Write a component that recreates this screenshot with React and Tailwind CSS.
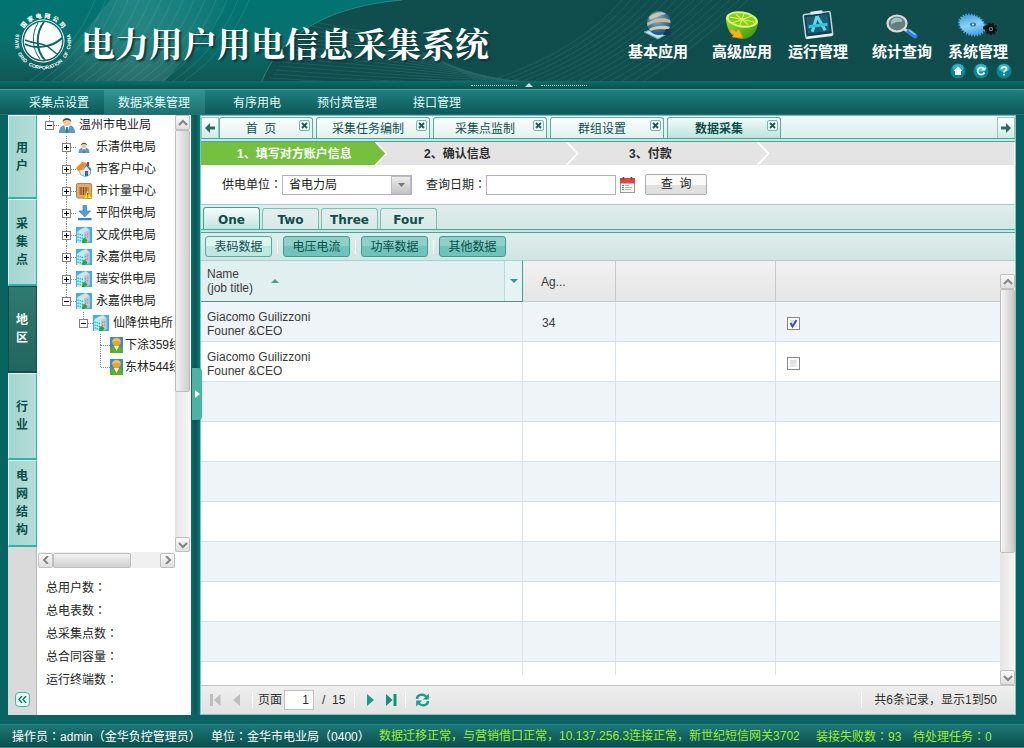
import React, { useState } from "react";

const Colon = () => <span className="font-['Noto_Sans_CJK_JP',sans-serif]">：</span>;

/* ---------- header drawings ---------- */

function HeaderBackdrop() {
  const fans = Array.from({ length: 15 }, (_, i) => i);
  return (
    <svg className="absolute inset-0 h-full w-full" viewBox="0 0 1024 81" preserveAspectRatio="xMinYMin slice" aria-hidden="true">
      <defs>
        <linearGradient id="hb" x1="0" y1="0" x2="0" y2="1">
          <stop offset="0" stopColor="#017472" />
          <stop offset="0.5" stopColor="#08706d" />
          <stop offset="1" stopColor="#0f5855" />
        </linearGradient>
        <linearGradient id="ray" x1="0" y1="0" x2="1" y2="0">
          <stop offset="0" stopColor="#fff" stopOpacity="0" />
          <stop offset="0.5" stopColor="#9fd0cb" stopOpacity="0.2" />
          <stop offset="1" stopColor="#fff" stopOpacity="0" />
        </linearGradient>
      </defs>
      <rect width="1024" height="81" fill="url(#hb)" />
      <path d="M45 81L110 0H235L165 81Z" fill="url(#ray)" />
      {fans.map((i) => (
        <path key={i} d={`M${30 + i * 11} 81Q${75 + i * 11} 50 ${95 + i * 11} 0`} stroke="#7fbdb6" strokeOpacity="0.2" fill="none" />
      ))}
      <path d="M262 81C276 46 312 8 402 0H1024V81Z" fill="#104e4d" />
      <path d="M262 81C276 46 312 8 402 0" stroke="#2a8783" fill="none" />
      {fans.map((i) => (
        <path key={i} d={`M${312 - i * 3} ${22 + i * 4}Q${400 + i * 3} ${34 + i * 4} ${480 + i * 5} 82`} stroke="#2c6b68" strokeOpacity="0.6" fill="none" />
      ))}
      {fans.map((i) => (
        <path key={i} d={`M${490 + i * 11} 81Q${580 + i * 8} 50 ${622 + i * 9} 0`} stroke="#2a6a66" strokeOpacity="0.55" fill="none" />
      ))}
    </svg>
  );
}

const RING_WORDS = [
  { word: "STATE", at: 3 },
  { word: "GRID", at: 23 },
  { word: "CORPORATION", at: 39 },
  { word: "OF", at: 80 },
  { word: "CHINA", at: 90 },
];

function Logo() {
  return (
    <svg width="58" height="58" viewBox="0 0 58 58" className="overflow-visible" role="img" aria-label="国家电网公司">
      <defs>
        <path id="arcBottom" d="M3 19A28 28 0 1 0 55 19" />
      </defs>
      <circle cx="29" cy="29" r="21" fill="none" stroke="#fff" strokeWidth="1" />
      <circle cx="29" cy="29" r="19" fill="#fff" />
      <g fill="none" stroke="#0b6663">
        <path d="M30 10C22 20 21 38 31 48" strokeWidth="2" />
        <path d="M24 11C17 22 18 37 26 47" strokeWidth="1" />
        <path d="M11 32C20 37 38 36 48 26" strokeWidth="2" />
        <path d="M11 28C20 32 28 31 33 34C37 37 40 40 43 42" strokeWidth="1.500" />
      </g>
      {"国家电网公司".split("").map((ch, i) => (
        <text
          key={ch}
          x="29"
          y="6"
          transform={`rotate(${-50 + i * 20} 29 29)`}
          textAnchor="middle"
          fill="#fff"
          fontSize="6"
          fontWeight="900"
          fontFamily="'Noto Sans CJK SC', sans-serif"
        >
          {ch}
        </text>
      ))}
      {RING_WORDS.map((w) => (
        <text key={w.word} fill="#fff" fontSize="5" fontWeight="bold" fontFamily="'Liberation Sans', sans-serif">
          <textPath href="#arcBottom" startOffset={w.at}>{w.word}</textPath>
        </text>
      ))}
    </svg>
  );
}

function GlobeIcon() {
  return (
    <svg width="32" height="32" viewBox="0 0 32 32" aria-hidden="true">
      <defs>
        <radialGradient id="gl" cx="0.4" cy="0.35" r="0.7">
          <stop offset="0" stopColor="#7ab8df" />
          <stop offset="1" stopColor="#17466f" />
        </radialGradient>
      </defs>
      <path d="M2 23L16 30L30 22L20 17Z" fill="#b5e5f5" stroke="#5fa8c8" />
      <circle cx="17" cy="14" r="12" fill="url(#gl)" />
      <path d="M7 8C12 3 20 2 24 5C18 6 13 9 8 11Z" fill="#cfc5a4" />
      <path d="M5 14C12 9 23 8 28 11L28.500 14C21 12 11 13 5.500 17Z" fill="#c9b98c" />
      <path d="M7 20C13 16 24 16 28 18L26 21C19 19 13 20 9 22Z" fill="#d8caa2" />
      <path d="M24 20H31L28 26H21Z" fill="#123a5c" />
    </svg>
  );
}

function LimeIcon() {
  return (
    <svg width="36" height="32" viewBox="0 0 36 32" aria-hidden="true">
      <defs>
        <linearGradient id="lm" x1="0" y1="0" x2="1" y2="1">
          <stop offset="0" stopColor="#a6e62e" />
          <stop offset="1" stopColor="#2c8f13" />
        </linearGradient>
      </defs>
      <path d="M2 8C2 22 9 30 18 30C28 30 34 22 34 12Z" fill="url(#lm)" />
      <ellipse cx="18" cy="10.500" rx="16" ry="8" transform="rotate(9 18 10.500)" fill="#d6f77a" />
      <ellipse cx="18" cy="10.500" rx="13.500" ry="6" transform="rotate(9 18 10.500)" fill="#86cf14" />
      <g stroke="#d9f36a" strokeWidth="1.200">
        <path d="M6 8L30 13M12 5.500L24 15.500M20 4.500L16 16M28 7L8 14" />
      </g>
      <path d="M7 19L12 23L15 20L19 29L8 28L10 26L6 23Z" fill="#ffb01f" stroke="#f08a00" strokeWidth="0.600" />
    </svg>
  );
}

function AppIcon() {
  return (
    <svg width="34" height="32" viewBox="0 0 34 32" aria-hidden="true">
      <g transform="rotate(-7 17 16)">
        <rect x="3.500" y="4" width="27" height="24" rx="1.500" fill="#123f4e" stroke="#c4d8dc" strokeWidth="1.500" />
        <rect x="6" y="6.500" width="22" height="17" fill="#186072" />
        <rect x="11" y="2" width="12" height="3" fill="#e4ecec" />
        <path d="M17 7L10.500 22M17 7L23.500 22" stroke="#5fdcea" strokeWidth="3" />
        <path d="M7.500 16.500H26.500" stroke="#39bfd6" strokeWidth="3" />
        <path d="M4.500 27H30" stroke="#f4f8f8" strokeWidth="2" />
      </g>
    </svg>
  );
}

function MagnifierIcon() {
  return (
    <svg width="34" height="32" viewBox="0 0 34 32" aria-hidden="true">
      <path d="M19 20L24 23" stroke="#d9d9d9" strokeWidth="3" />
      <path d="M24 22.500L30 27" stroke="#2e83dd" strokeWidth="5" strokeLinecap="round" />
      <path d="M24.500 21.300L30 25.500" stroke="#8cc4ff" strokeWidth="1.500" strokeLinecap="round" />
      <ellipse cx="12" cy="14.500" rx="9.500" ry="8" fill="#60807f" stroke="#e0d8d4" strokeWidth="2.200" />
      <path d="M6 14C6 10 10 8 14 9C18 10 18 13 16 13C12 12 8 14 6 16Z" fill="#a9bebd" />
    </svg>
  );
}

function GearsIcon() {
  return (
    <svg width="42" height="32" viewBox="0 0 42 32" aria-hidden="true">
      <defs>
        <linearGradient id="gr" x1="0" y1="0" x2="1" y2="1">
          <stop offset="0" stopColor="#2d8fd0" />
          <stop offset="0.5" stopColor="#8ad4fb" />
          <stop offset="1" stopColor="#2b86cc" />
        </linearGradient>
      </defs>
      <g transform="rotate(22 15 16)">
        <ellipse cx="15" cy="16" rx="13.500" ry="10" fill="none" stroke="#49a9e4" strokeWidth="1.800" strokeDasharray="1.500 1.300" />
        <ellipse cx="15" cy="16" rx="13" ry="9.500" fill="url(#gr)" />
      </g>
      <ellipse cx="16" cy="15.500" rx="3" ry="2" fill="#2b6fb0" />
      <circle cx="16" cy="15.500" r="1" fill="#fff" />
      <path d="M26 19L33 18" stroke="#111" strokeWidth="3" />
      <circle cx="34" cy="20" r="5" fill="#111" stroke="#161616" strokeWidth="2.500" strokeDasharray="2 1.400" />
      <circle cx="34" cy="20" r="2.200" fill="#6b7676" />
      <circle cx="34" cy="20" r="0.900" fill="#111" />
    </svg>
  );
}

function RoundButton({ label, children }) {
  return (
    <button type="button" aria-label={label} className="h-4 w-4">
      <svg width="16" height="16" viewBox="0 0 16 16" aria-hidden="true">
        <circle cx="8" cy="8" r="7.500" fill="#07869a" />
        <ellipse cx="8" cy="5" rx="5.500" ry="4" fill="#25b9c8" />
        {children}
      </svg>
    </button>
  );
}

/* ---------- tree icons ---------- */

function PersonIcon({ small }) {
  const s = small ? 11 : 16;
  return (
    <svg width="16" height={s} viewBox="0 0 16 16" aria-hidden="true">
      <path d="M0 16C0 10 3 8 8 8C13 8 16 10 16 16Z" fill="#5b9bd0" />
      <path d="M5 8L8 16L11 8Z" fill="#eef7ff" />
      <path d="M7.200 10H8.800L9.400 16H6.600Z" fill="#2f8a55" />
      <circle cx="8" cy="5" r="4" fill="#f4c9a0" />
      <path d="M3.800 5C3 0 13 0 12.200 5C11 3 9 3 8 3C6 3 5 3.500 3.800 5Z" fill="#5d471a" />
    </svg>
  );
}
function HouseIcon() {
  return (
    <svg width="16" height="16" viewBox="0 0 16 16" aria-hidden="true">
      <path d="M2 8L5 14L10 16L14.500 13V7L10 3Z" fill="#dceafa" stroke="#5d8fc9" strokeWidth="0.700" />
      <path d="M11 1H13V5H11Z" fill="#c22d2d" />
      <path d="M0 7L6 1L11 2L6 9L2 10Z" fill="#f58a1f" />
      <path d="M10.500 3L15.500 9L14 9.500L10.500 5L6 10Z" fill="#3a6fb3" />
      <path d="M9 10H12V15H9Z" fill="#3069ad" />
    </svg>
  );
}
function CrateIcon() {
  return (
    <svg width="16" height="16" viewBox="0 0 16 16" aria-hidden="true">
      <rect x="0.500" y="0.500" width="15" height="14.500" rx="1.500" fill="#e0ab70" stroke="#b98048" />
      <rect x="3" y="4" width="10" height="8" fill="#c48a50" />
      <path d="M5 4V12M7.500 4V12M10 4V12" stroke="#84521f" />
      <path d="M11.500 7L16 15.500H7.500Z" fill="#ffe43a" stroke="#b69a00" strokeWidth="0.700" />
      <path d="M11.800 10V12.500M11.800 13.500V14.500" stroke="#222" />
    </svg>
  );
}
function DownloadIcon() {
  return (
    <svg width="16" height="16" viewBox="0 0 16 16" aria-hidden="true">
      <path d="M7 0.500H10.500V6H14.500L8.700 12L3 6H7Z" fill="#4d9fe0" stroke="#2d7fc4" strokeWidth="0.700" />
      <rect x="2" y="13" width="13.500" height="2.200" fill="#2d85cf" />
    </svg>
  );
}
function BuildingIcon() {
  return (
    <svg width="16" height="16" viewBox="0 0 16 16" aria-hidden="true">
      <rect width="16" height="16" fill="#3fadf2" />
      <path d="M1 5L5 2L10 0L13.500 3V14L8 16H1Z" fill="#d8e2e6" />
      <path d="M3 3L8 5V16L1 14V6Z" fill="#b6f0f2" />
      <path d="M8 5L13.500 3V14L8 16Z" fill="#c4c4cb" />
      <path d="M1.500 7L7 8.500M1.500 10L7 11.500M1.500 13L7 14.500" stroke="#17b3c4" strokeDasharray="1.200 1" strokeWidth="1.500" />
      <path d="M9 8L13 6.500M9 10.500L13 9.500" stroke="#7d8490" strokeDasharray="1 1" />
      <path d="M6.500 12.500C8 10 10 11 11.500 14L9 16H6Z" fill="#2fa534" />
    </svg>
  );
}
function UserTileIcon() {
  return (
    <svg width="13" height="16" viewBox="0 0 13 16" aria-hidden="true">
      <rect width="13" height="16" fill="#2d8fd6" />
      <path d="M0 16V12C1 9.500 4 9 6.500 9C9 9 12 9.500 13 12V16Z" fill="#5fae22" />
      <path d="M4 9H9L6.500 14Z" fill="#f2fbe8" />
      <circle cx="6.500" cy="5" r="4.300" fill="#f4a11c" />
      <path d="M2.200 5C2 0 11 0 10.800 5C9 3.500 4 3.500 2.200 5Z" fill="#f7c14e" />
    </svg>
  );
}

const ICONS = {
  person: <PersonIcon />,
  small: <PersonIcon small />,
  house: <HouseIcon />,
  crate: <CrateIcon />,
  down: <DownloadIcon />,
  building: <BuildingIcon />,
  user: <UserTileIcon />,
};

const TREE = {
  label: "温州市电业局",
  icon: "person",
  children: [
    { label: "乐清供电局", icon: "small" },
    { label: "市客户中心", icon: "house" },
    { label: "市计量中心", icon: "crate" },
    { label: "平阳供电局", icon: "down" },
    { label: "文成供电局", icon: "building" },
    { label: "永嘉供电局", icon: "building" },
    { label: "瑞安供电局", icon: "building" },
    {
      label: "永嘉供电局",
      icon: "building",
      children: [
        {
          label: "仙降供电所",
          icon: "building",
          children: [
            { label: "下涂359线", icon: "user", leaf: true },
            { label: "东林544线", icon: "user", leaf: true },
          ],
        },
      ],
    },
  ],
};

function TreeNode({ node, last }) {
  return (
    <li>
      <div className="flex h-[22px] items-center whitespace-nowrap [&_svg]:shrink-0">
        <span className="flex h-full w-[9px] shrink-0 flex-col items-center">
          <span className="flex-1 border-l border-dotted border-[#888]" />
          {!node.leaf && (
            <button
              type="button"
              aria-label={node.children ? "收起" : "展开"}
              className="flex h-[9px] w-[9px] items-center justify-center border border-[#808080] bg-white"
            >
              <svg width="5" height="5" viewBox="0 0 5 5" aria-hidden="true">
                <path d={node.children ? "M0 2.500H5" : "M0 2.500H5M2.500 0V5"} stroke="#000" />
              </svg>
            </button>
          )}
          <span className={last ? "flex-1 border-l border-transparent" : "flex-1 border-l border-dotted border-[#888]"} />
        </span>
        <span className={node.leaf ? "-ml-1 w-[9px] shrink-0 border-t border-dotted border-[#888]" : "w-[5px] shrink-0 border-t border-dotted border-[#888]"} />
        {ICONS[node.icon]}
        <a href="#" className={node.leaf ? "ml-0.5" : "ml-1"}>{node.label}</a>
      </div>
      {node.children && (
        <ul className="pl-[17px]">
          {node.children.map((c, i) => (
            <TreeNode key={i} node={c} last={i === node.children.length - 1} />
          ))}
        </ul>
      )}
    </li>
  );
}

/* ---------- scroll bars ---------- */

const CHEVRONS = { up: "M1 6L5 2L9 6", down: "M1 2L5 6L9 2", left: "M7 0L3 4L7 8", right: "M3 0L7 4L3 8" };

function ScrollButton({ dir }) {
  return (
    <button
      type="button"
      aria-label={dir}
      className="flex h-[15px] w-[15px] shrink-0 items-center justify-center rounded-xs border border-[#c0c0c0] bg-gradient-to-b from-[#fafafa] to-[#dedede]"
    >
      <svg width="10" height="8" viewBox="0 0 10 8" aria-hidden="true">
        <path d={CHEVRONS[dir]} fill="none" stroke="#858585" strokeWidth="2" />
      </svg>
    </button>
  );
}

function VScroll({ thumb }) {
  return (
    <div className="flex h-full w-[15px] shrink-0 flex-col bg-gradient-to-r from-[#e4e4e4] to-[#f6f6f6]">
      <ScrollButton dir="up" />
      <div className="min-h-0 flex-1">
        <div className={thumb} />
      </div>
      <ScrollButton dir="down" />
    </div>
  );
}

/* ---------- page parts ---------- */

const MENU = [
  { label: "基本应用", icon: <GlobeIcon />, gap: "mr-6" },
  { label: "高级应用", icon: <LimeIcon />, gap: "mr-4" },
  { label: "运行管理", icon: <AppIcon />, gap: "mr-6" },
  { label: "统计查询", icon: <MagnifierIcon />, gap: "mr-4" },
  { label: "系统管理", icon: <GearsIcon />, gap: "" },
];

function Header() {
  return (
    <header className="relative flex h-[81px] justify-between overflow-hidden bg-[#104e4d]">
      <HeaderBackdrop />
      <div className="relative flex items-center gap-[9px] pl-[14px]">
        <Logo />
        <h1 className="pt-1 font-['Noto_Serif_CJK_SC','Noto_Sans_CJK_SC',serif] text-[34px] leading-none font-bold whitespace-nowrap text-white [text-shadow:2px_2px_2px_#0a3a39]">
          电力用户用电信息采集系统
        </h1>
      </div>
      <div className="relative flex flex-col items-end pt-[9px]">
        <nav className="flex pr-4">
          {MENU.map((m) => (
            <a key={m.label} href="#" className={"flex w-[60px] flex-col items-center text-[15px] leading-[22px] font-bold whitespace-nowrap text-white " + m.gap}>
              {m.icon}
              <span>{m.label}</span>
            </a>
          ))}
        </nav>
        <div className="flex gap-[7px] pr-3">
          <RoundButton label="首页">
            <path d="M8 3.500L3.500 8H5V12H11V8H12.500Z" fill="#fff" />
          </RoundButton>
          <RoundButton label="刷新">
            <path d="M11.300 9.500A3.500 3.500 0 1 1 11 6" stroke="#fff" strokeWidth="1.800" fill="none" />
            <path d="M7.500 7.500H12.500V4Z" fill="#fff" />
          </RoundButton>
          <RoundButton label="帮助">
            <path d="M5.500 6.300C5.500 3 10.700 3.300 10.500 6C10.400 7.700 8 7.500 8 9.600M8 10.800V12.500" stroke="#fff" strokeWidth="1.900" fill="none" />
          </RoundButton>
        </div>
      </div>
    </header>
  );
}

const NAV = [
  { label: "采集点设置", cls: "pl-[14px] pr-[15px]" },
  { label: "数据采集管理", cls: "mr-[10px] pl-[14px] pr-[15px] bg-gradient-to-b from-[#319593] to-[#1c716f]" },
  { label: "有序用电", cls: "px-[18px]" },
  { label: "预付费管理", cls: "px-[18px]" },
  { label: "接口管理", cls: "px-[18px]" },
];

const SIDE = [
  { label: "用户", cls: "h-[84px]" },
  { label: "采集点", cls: "h-[87px]" },
  { label: "地区", cls: "h-[87px]", active: true },
  { label: "行业", cls: "h-[87px]" },
  { label: "电网结构", cls: "h-[87px]" },
];

function Sidebar() {
  return (
    <aside className="flex shrink-0">
      <div className="flex w-[29px] flex-col items-center border-r border-[#b5b5b5] bg-[#dadada]">
        {SIDE.map((s) => (
          <button
            key={s.label}
            type="button"
            className={
              "flex w-[29px] flex-col items-center justify-center border border-b-2 text-xs leading-[18px] font-bold " +
              s.cls +
              (s.active
                ? " border-[#0b4f4b] border-t-[#0b4f4b] bg-gradient-to-b from-[#2f7a70] to-[#22665e] text-white"
                : " border-[#e4f6f3] border-r-[#2fb3a4] border-b-[#2fb3a4] bg-gradient-to-r from-[#a3d6cf] to-[#b3ded8] text-[#0c4f4b]")
            }
          >
            {s.label.split("").map((ch) => (
              <span key={ch}>{ch}</span>
            ))}
          </button>
        ))}
        <button type="button" aria-label="收起" className="mt-auto mb-2 flex h-[15px] w-[15px] items-center justify-center rounded-sm border border-[#3fb8a5] bg-[#e6f8f4]">
          <svg width="9" height="7" viewBox="0 0 9 7" aria-hidden="true">
            <path d="M4 0L1 3.500L4 7M8 0L5 3.500L8 7" stroke="#0f7a68" strokeWidth="1.400" fill="none" />
          </svg>
        </button>
      </div>
      <div className="flex w-[154px] flex-col bg-white pr-px">
        <div className="flex h-[437px]">
          <ul className="-mt-px min-w-0 flex-1 overflow-hidden pl-2">
            <TreeNode node={TREE} last />
          </ul>
          <VScroll thumb="h-[262px] rounded-xs border border-[#bdbdbd] bg-gradient-to-r from-[#f3f3f3] to-[#cfcfcf]" />
        </div>
        <div className="mr-[15px] ml-px flex h-4 items-center bg-[#f0f0f0]">
          <ScrollButton dir="left" />
          <div className="flex-1">
            <div className="h-[15px] w-[78px] rounded-xs border border-[#bdbdbd] bg-gradient-to-b from-[#f3f3f3] to-[#cfcfcf]" />
          </div>
          <ScrollButton dir="right" />
        </div>
        <ul className="pt-[7px] pl-[9px] leading-[23px]">
          {["总用户数", "总电表数", "总采集点数", "总合同容量", "运行终端数"].map((t) => (
            <li key={t} className="h-[23px]">{t}<Colon /></li>
          ))}
        </ul>
      </div>
    </aside>
  );
}

function CloseButton() {
  return (
    <button type="button" aria-label="关闭" className="absolute top-0.5 right-0.5 flex h-[11px] w-[11px] items-center justify-center rounded-xs border border-[#74b8ae] bg-[#eafaf7]">
      <svg width="7" height="7" viewBox="0 0 7 7" aria-hidden="true">
        <path d="M1 1L6 6M6 1L1 6" stroke="#1d5a53" strokeWidth="1.800" />
      </svg>
    </button>
  );
}

const ARROWS = {
  left: "M0 5L5 0V3.500H10V6.500H5V10Z",
  right: "M10 5L5 0V3.500H0V6.500H5V10Z",
};

function TabArrow({ dir }) {
  return (
    <button
      type="button"
      aria-label={dir}
      className="flex h-[21px] w-[18px] items-center justify-center border border-b-0 border-[#93c9c1] bg-gradient-to-b from-white to-[#cdebe5]"
    >
      <svg width="10" height="10" viewBox="0 0 10 10" aria-hidden="true">
        <path d={ARROWS[dir]} fill="#2d6a61" />
      </svg>
    </button>
  );
}

const TABS = [
  { label: "首\u00a0 页", cls: "w-[94px]" },
  { label: "采集任务编制", cls: "w-[114px]" },
  { label: "采集点监制", cls: "w-[114px]" },
  { label: "群组设置", cls: "w-[114px]" },
  { label: "数据采集", cls: "w-[114px]", active: true },
];

function PageTabs() {
  return (
    <div className="flex h-[27px] flex-col border-t border-[#74b5ad]">
      <div className="flex h-[22px] items-end bg-gradient-to-b from-[#eef9f6] to-[#d8efea]">
        <TabArrow dir="left" />
        <div role="tablist" className="flex gap-[3px]">
          {TABS.map((t) => (
            <div
              key={t.label}
              className={
                "relative flex h-[21px] rounded-t-[3px] border border-b-0 border-[#5aaba1] text-[#0d4f4a] " +
                t.cls +
                (t.active ? " bg-gradient-to-b from-[#f2fbf9] to-[#bce4de] font-bold" : " bg-gradient-to-b from-[#fbfefd] to-[#e0f3ef]")
              }
            >
              <button type="button" role="tab" aria-selected={!!t.active} className="flex-1 pr-[10px] text-center leading-[22px]">
                {t.label}
              </button>
              <CloseButton />
            </div>
          ))}
        </div>
        <div className="ml-auto">
          <TabArrow dir="right" />
        </div>
      </div>
      <div className="h-1 border-y border-[#4aa598] bg-[#c4e8e2]" />
    </div>
  );
}

function StepArrow({ fill }) {
  return (
    <svg width="13" height="23" viewBox="0 0 13 23" className="ml-auto shrink-0" aria-hidden="true">
      <path d="M0 0H13V23H0Z" fill="#e4e4e4" />
      <path d="M0 0L11 11.500L0 23Z" fill={fill} />
      <path d="M0 -0.500L11.500 11.500L0 23.500" fill="none" stroke="#fff" strokeWidth="1.800" />
    </svg>
  );
}

function Steps() {
  return (
    <ol className="mr-px flex h-[23px] bg-[#e4e4e4] leading-[25px] font-bold text-[#2c2c2c]">
      <li className="flex w-[187px] bg-[#76c03f] pl-9 text-white">
        1、填写对方账户信息
        <StepArrow fill="#76c03f" />
      </li>
      <li className="flex w-[191px] pl-9">
        2、确认信息
        <StepArrow fill="#e4e4e4" />
      </li>
      <li className="flex w-[191px] pl-[50px]">
        3、付款
        <StepArrow fill="#e4e4e4" />
      </li>
    </ol>
  );
}

function QueryForm() {
  return (
    <form className="flex h-[39px] items-center pl-[21px]" onSubmit={(e) => e.preventDefault()}>
      <label htmlFor="org">供电单位<Colon /></label>
      <div className="relative h-5 w-[130px]">
        <select id="org" className="h-5 w-full appearance-none border border-[#b0afc5] bg-white pl-1.5 text-xs">
          <option>省电力局</option>
        </select>
        <span className="pointer-events-none absolute top-px right-px flex h-[18px] w-5 items-center justify-center border border-[#bdbdbd] bg-gradient-to-b from-[#ededed] to-[#c4c4c4]">
          <svg width="7" height="4" viewBox="0 0 7 4" aria-hidden="true">
            <path d="M0 0H7L3.500 4Z" fill="#777" />
          </svg>
        </span>
      </div>
      <label htmlFor="date" className="ml-[14px]">查询日期<Colon /></label>
      <input id="date" type="text" className="h-5 w-[130px] border border-[#b0afc5] bg-white px-1 text-xs" />
      <button type="button" aria-label="选择日期" className="ml-1">
        <svg width="15" height="16" viewBox="0 0 15 16" aria-hidden="true">
          <rect x="0.500" y="1.500" width="14" height="14" fill="#f7f9f9" stroke="#999" />
          <rect x="0" y="1" width="15" height="5.500" fill="#e8433f" />
          <path d="M3.500 0V3M11.500 0V3" stroke="#555" strokeWidth="1.600" />
          <path d="M2 8.500H4M2 10.500H4M2 12.500H4" stroke="#3c9a5c" />
          <path d="M5 8.500H9M5 10.500H12M5 12.500H11" stroke="#a9b8bd" />
        </svg>
      </button>
      <button type="submit" className="ml-[10px] h-[21px] w-[62px] rounded-xs border border-[#adadad] bg-gradient-to-b from-[#fafafa] from-50% to-[#e0e0e0] to-50% text-xs leading-[19px]">
        查&nbsp; 询
      </button>
    </form>
  );
}

function SubTabs() {
  return (
    <>
      <div role="tablist" className="flex h-[25px] items-end gap-0.5 border-t border-[#9fcfc9] bg-gradient-to-b from-[#e0eeed] to-[#d3e6e4] pl-0.5 font-['DejaVu_Sans',sans-serif] font-bold text-[#0d4f4a]">
        {["One", "Two", "Three", "Four"].map((t, i) => (
          <button
            key={t}
            type="button"
            role="tab"
            aria-selected={i === 0}
            className={
              "w-[57px] rounded-t-[3px] border border-b-0 pt-0.5 text-center leading-[18px] " +
              (i === 0 ? "h-[22px] border-[#3fa093] bg-gradient-to-b from-[#f7fcfb] to-[#c0e6e0]" : "h-[21px] border-[#7fbdb5] bg-gradient-to-b from-[#e2efee] to-[#d9eae8]")
            }
          >
            {t}
          </button>
        ))}
      </div>
      <div className="h-1 border-y border-[#4aa598] bg-[#c4e8e2]" />
    </>
  );
}

function Toolbar() {
  return (
    <div className="flex h-[27px] items-center bg-gradient-to-b from-[#deedeb] to-[#d1e5e3] pl-1">
      {["表码数据", "电压电流", "功率数据", "其他数据"].map((t, i) => (
        <React.Fragment key={t}>
          {i > 0 && <span className="mr-[5px] ml-[5px] h-3.5 border-l border-white" />}
          <button
            type="button"
            className={
              "h-[21px] w-[67px] rounded-[3px] border text-center leading-5 text-[#0d4f4a] " +
              (i === 0
                ? "border-[#4fae9f] bg-gradient-to-b from-[#dcf5f1] from-50% to-[#bfe7e2] to-50%"
                : "border-[#3f9c90] bg-gradient-to-b from-[#8fd0c9] from-50% to-[#70c3ba] to-50%")
            }
          >
            {t}
          </button>
        </React.Fragment>
      ))}
    </div>
  );
}

const ROWS = [
  { name: "Giacomo Guilizzoni", job: "Founer &CEO", age: "34", box: true, on: true },
  { name: "Giacomo Guilizzoni", job: "Founer &CEO", box: true, on: false },
  {}, {}, {}, {}, {}, {}, {},
];

function Tick({ initial }) {
  const [on, setOn] = useState(initial);
  return (
    <div className="relative h-[13px] w-[13px]">
      <input
        type="checkbox"
        aria-label="选择"
        checked={on}
        onChange={() => setOn(!on)}
        className="block h-[13px] w-[13px] appearance-none border border-[#868686] bg-gradient-to-br from-[#cfd3d8] to-[#f7f8f9] outline outline-2 -outline-offset-3 outline-white"
      />
      {on && (
        <svg className="pointer-events-none absolute inset-0" width="13" height="13" viewBox="0 0 13 13" aria-hidden="true">
          <path d="M3.500 6L5.500 9.500L9.500 3" stroke="#3c55a0" strokeWidth="2" fill="none" />
        </svg>
      )}
    </div>
  );
}

function Grid() {
  const cell = "border-r border-[#d7e2ec] p-0";
  return (
    <div className="relative min-h-[425px] flex-1 bg-white">
      <table className="w-full table-fixed border-separate border-spacing-0 font-['Liberation_Sans','Noto_Sans_CJK_SC',sans-serif] leading-[14px] text-[#3a3a3a]">
        <colgroup>
          <col className="w-[322px]" />
          <col className="w-[93px]" />
          <col className="w-[160px]" />
          <col />
        </colgroup>
        <thead>
          <tr className="h-[42px] text-left">
            <th className="border-t border-r border-b border-t-[#a5d0d2] border-r-[#3fa093] border-b-[#5a8f83] bg-[#e1eff0] p-0 font-normal">
              <div className="flex h-10 items-center pl-1.5">
                <span>Name<br />(job title)</span>
                <svg className="ml-[18px]" width="8" height="4" viewBox="0 0 8 4" aria-hidden="true">
                  <path d="M0 4L4 0L8 4Z" fill="#3fa093" />
                </svg>
                <button type="button" aria-label="列菜单" className="ml-auto flex h-full w-[18px] items-center justify-center border-l border-[#b9dcd9] bg-[#e5f3f3]">
                  <svg width="8" height="4" viewBox="0 0 8 4" aria-hidden="true">
                    <path d="M0 0H8L4 4Z" fill="#2f9a8c" />
                  </svg>
                </button>
              </div>
            </th>
            <th className="border-t border-r border-b border-[#c8c8c8] border-t-[#a5d0d2] bg-gradient-to-b from-[#f1f1f1] to-[#e6e6e6] pt-0.5 pr-0 pb-0 pl-[18px] font-normal">Ag...</th>
            <th className="border-t border-r border-b border-[#c8c8c8] border-t-[#a5d0d2] bg-gradient-to-b from-[#f1f1f1] to-[#e6e6e6] p-0" />
            <th className="border-t border-b border-[#c8c8c8] border-t-[#a5d0d2] bg-gradient-to-b from-[#f1f1f1] to-[#e6e6e6] p-0" />
          </tr>
        </thead>
        <tbody>
          {ROWS.map((r, i) => (
            <tr key={i} className="h-10 odd:bg-[#eff4f8]">
              <td className={cell + " border-b pt-1 pl-1.5"}>
                {r.name}
                {r.name && <br />}
                {r.job}
              </td>
              <td className={cell + " border-b pt-0.5 pl-[19px]"}>{r.age}</td>
              <td className={cell + " border-b"} />
              <td className="border-b border-[#d7e2ec] pt-1 pr-0 pb-0 pl-[11px]">{r.box && <Tick initial={r.on} />}</td>
            </tr>
          ))}
          <tr className="h-[13px]">
            <td className={cell} />
            <td className={cell} />
            <td className={cell} />
            <td className="p-0" />
          </tr>
        </tbody>
      </table>
      <div className="absolute top-[14px] right-0 bottom-0">
        <VScroll thumb="h-[264px] rounded-xs border border-[#bdbdbd] bg-gradient-to-r from-[#f6f6f6] to-[#c9c9c9]" />
      </div>
    </div>
  );
}

function Pager() {
  const sep = "h-4 border-l border-white";
  return (
    <div className="flex h-[29px] items-center border-t border-[#c3c3c3] bg-gradient-to-b from-[#efefef] to-[#e2e2e2] font-['Liberation_Sans','Noto_Sans_CJK_SC',sans-serif] text-[#2f2f2f]">
      <button type="button" aria-label="第一页" className="ml-[9px]">
        <svg width="11" height="12" viewBox="0 0 11 12" aria-hidden="true"><path d="M0 0H3V12H0ZM10.500 0V12L4 6Z" fill="#bdbdbd" /></svg>
      </button>
      <button type="button" aria-label="上一页" className="ml-3">
        <svg width="7" height="12" viewBox="0 0 7 12" aria-hidden="true"><path d="M7 0V12L0 6Z" fill="#bdbdbd" /></svg>
      </button>
      <span className={sep + " ml-3"} />
      <label htmlFor="page" className="ml-[5px]">页面</label>
      <input id="page" type="text" defaultValue="1" className="ml-0.5 h-5 w-[30px] border border-[#c0c0c0] bg-white pr-1 text-right text-xs" />
      <span className="ml-2">/&nbsp; 15</span>
      <span className={sep + " ml-[9px]"} />
      <button type="button" aria-label="下一页" className="ml-3">
        <svg width="7" height="12" viewBox="0 0 7 12" aria-hidden="true"><path d="M0 0V12L7 6Z" fill="#12a088" /></svg>
      </button>
      <button type="button" aria-label="最后一页" className="ml-3">
        <svg width="11" height="12" viewBox="0 0 11 12" aria-hidden="true"><path d="M0 0V12L6.500 6ZM7.500 0H10.500V12H7.500Z" fill="#0f937c" /></svg>
      </button>
      <span className={sep + " ml-2"} />
      <button type="button" aria-label="刷新" className="ml-[9px]">
        <svg width="15" height="14" viewBox="0 0 15 14" aria-hidden="true">
          <path d="M2 6C2 1.500 8 0.500 11 3.500M13 8C13 12.500 7 13.500 4 10.500" stroke="#17a08c" strokeWidth="2.400" fill="none" />
          <path d="M13.800 0.500V6.500H7.800ZM1.200 13.500V7.500H7.200Z" fill="#17a08c" />
        </svg>
      </button>
      <span className={sep + " ml-auto"} />
      <span className="mr-[18px] ml-3">共6条记录，显示1到50</span>
    </div>
  );
}

export default function App() {
  return (
    <div className="flex min-h-screen flex-col bg-[#0d5655] font-['Liberation_Sans','Noto_Sans_CJK_SC',sans-serif] text-xs text-[#222]">
      <Header />
      <div className="flex h-2 items-center justify-center gap-2 bg-gradient-to-b from-[#04716e] to-[#0b4f4d] pl-[34px]">
        <span className="w-[46px] border-t border-dotted border-[#a9cfcc]" />
        <svg width="8" height="4" viewBox="0 0 8 4" aria-hidden="true"><path d="M4 0L8 4H0Z" fill="#c6dedc" /></svg>
        <span className="w-[46px] border-t border-dotted border-[#a9cfcc]" />
      </div>
      <nav className="flex h-[26px] border-t border-b border-t-[#4a9e9c] border-b-[#2d7270] bg-gradient-to-b from-[#1f8180] to-[#0b5a58] pl-[15px]">
        {NAV.map((n) => (
          <a key={n.label} href="#" className={"leading-[26px] text-[#e4fbfa] " + n.cls}>{n.label}</a>
        ))}
      </nav>
      <main className="flex flex-1 border-x-8 border-b-[9px] border-x-[#086462] border-b-[#096362]">
        <Sidebar />
        <div className="relative w-[9px] shrink-0 bg-gradient-to-r from-[#0a706d] via-[#0b5553] to-[#047c78]">
          <button type="button" aria-label="收起侧栏" className="absolute top-[253px] left-px z-10 flex h-[52px] w-[10px] items-center justify-center rounded-r-[4px] bg-[#4cb3a2] shadow-sm">
            <svg width="5" height="8" viewBox="0 0 5 8" aria-hidden="true"><path d="M0 0L5 4L0 8Z" fill="#fff" /></svg>
          </button>
        </div>
        <section className="flex min-w-0 flex-1 flex-col border-x border-b border-[#7fc5bc] bg-white">
          <PageTabs />
          <Steps />
          <QueryForm />
          <SubTabs />
          <Toolbar />
          <Grid />
          <Pager />
        </section>
      </main>
      <footer className="flex h-6 items-center overflow-hidden border-t border-b border-t-[#2a8483] border-b-[#3a8f8d] bg-gradient-to-b from-[#1d7877] to-[#0a4f4e] pl-3 whitespace-nowrap text-white">
        <span className="w-[199px]">操作员<Colon />admin（金华负控管理员）</span>
        <span className="w-[168px]">单位<Colon />金华市电业局（0400）</span>
        <span className="w-[437px] text-[#9dee2b]">数据迁移正常，与营销借口正常，10.137.256.3连接正常，新世纪短信网关3702</span>
        <span className="w-[97px] text-[#9dee2b]">装接失败数<Colon />93</span>
        <span className="text-[#9dee2b]">待处理任务<Colon />0</span>
      </footer>
    </div>
  );
}
